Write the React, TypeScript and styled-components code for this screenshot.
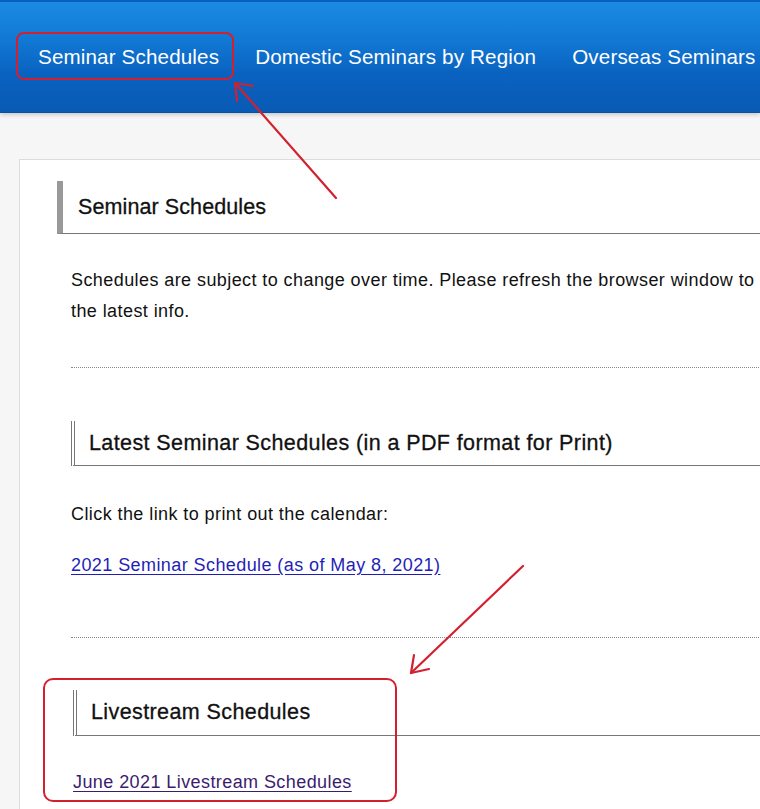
import React from 'react';
import styled, { createGlobalStyle } from 'styled-components';

const GlobalStyle = createGlobalStyle`
  html, body {
    margin: 0;
    padding: 0;
  }
  body {
    background: #f6f6f6;
    overflow: hidden;
    font-family: 'Liberation Sans', Arial, sans-serif;
    color: #111;
  }
`;

const Page = styled.div`
  position: relative;
  width: 760px;
  height: 809px;
  overflow: hidden;
`;

const NavBar = styled.nav`
  display: flex;
  align-items: center;
  height: 110px;
  padding-left: 20px;
  border-top: 2px solid #0b5fbe;
  border-bottom: 1px solid #0850a4;
  background: linear-gradient(#1a8be2 0%, #1178d4 35%, #0a62c0 65%, #095ab4 100%);
  box-shadow: 0 2px 4px rgba(0, 0, 0, 0.18);
  white-space: nowrap;
`;

const NavItem = styled.a<{ $marked?: boolean }>`
  position: relative;
  padding: 0 18px;
  color: #fff;
  font-size: 20.6px;
  letter-spacing: 0.15px;
  text-decoration: none;

  ${({ $marked }) =>
    $marked &&
    `
    &::after {
      content: '';
      position: absolute;
      left: -4px;
      right: 3px;
      top: -13px;
      bottom: -11px;
      border: 2px solid #d3202e;
      border-radius: 8px;
    }
  `}
`;

const Main = styled.main`
  padding: 46px 0 0 19px;
`;

const Panel = styled.div`
  width: 900px;
  min-height: 700px;
  background: #fff;
  border-top: 1px solid #dcdcdc;
  border-left: 1px solid #dcdcdc;
  padding: 21px 0 0 37px;
`;

const PageTitle = styled.h2`
  margin: 0;
  height: 52px;
  display: flex;
  align-items: center;
  padding-left: 15px;
  border-left: 6px solid #999;
  border-bottom: 1px solid #777;
  font-size: 21.5px;
  font-weight: normal;
  letter-spacing: 0.1px;
  -webkit-text-stroke: 0.3px #111;
`;

const Section = styled.section<{ $shift?: number }>`
  margin-left: ${({ $shift }) => 14 + ($shift ?? 0)}px;
`;

const SectionTitle = styled.h3<{ $height: number }>`
  margin: 0;
  height: ${({ $height }) => $height}px;
  display: flex;
  align-items: center;
  padding-left: 14px;
  border-left: 4px double #777;
  border-bottom: 1px solid #777;
  font-size: 21.5px;
  font-weight: normal;
  letter-spacing: 0.4px;
  -webkit-text-stroke: 0.3px #111;
`;

const Text = styled.p<{ $gap?: number }>`
  margin: ${({ $gap }) => $gap ?? 0}px 0 0;
  font-size: 18px;
  line-height: 31px;
  letter-spacing: 0.42px;
  width: 740px;
`;

const Link = styled.a<{ $visited?: boolean }>`
  color: ${({ $visited }) => ($visited ? '#3b1d6e' : '#1f1fb8')};
  text-decoration: underline;
  text-underline-offset: 3px;
`;

const Divider = styled.hr<{ $top: number; $bottom: number }>`
  margin: ${({ $top }) => $top}px 0 ${({ $bottom }) => $bottom}px;
  border: 0;
  border-top: 1px dotted #888;
  height: 0;
`;

const Marker = styled.div`
  position: relative;
  margin-left: -30px;
  padding: 0 0 0 30px;

  &::after {
    content: '';
    position: absolute;
    left: 0;
    top: -12px;
    width: 350px;
    bottom: -4px;
    border: 2px solid #d3202e;
    border-radius: 10px;
  }
`;

const Arrows = styled.svg`
  position: absolute;
  inset: 0;
  pointer-events: none;
`;

const App: React.FC = () => {
  return (
    <Page>
      <GlobalStyle />
      <NavBar>
        <NavItem $marked>Seminar Schedules</NavItem>
        <NavItem>Domestic Seminars by Region</NavItem>
        <NavItem>Overseas Seminars</NavItem>
      </NavBar>

      <Main>
        <Panel>
          <PageTitle>Seminar Schedules</PageTitle>

          <Section>
            <Text $gap={31}>
              Schedules are subject to change over time. Please refresh the browser window to see
              the latest info.
            </Text>
            <Divider $top={40} $bottom={53} />

            <SectionTitle $height={44}>
              Latest Seminar Schedules (in a PDF format for Print)
            </SectionTitle>
            <Text $gap={33}>Click the link to print out the calendar:</Text>
            <Text $gap={20}>
              <Link href="#">2021 Seminar Schedule (as of May 8, 2021)</Link>
            </Text>
            <Divider $top={56} $bottom={52} />
          </Section>

          <Section $shift={2}>
            <Marker>
              <SectionTitle $height={45}>Livestream Schedules</SectionTitle>
              <Text $gap={31}>
                <Link href="#" $visited>
                  June 2021 Livestream Schedules
                </Link>
              </Text>
            </Marker>
          </Section>
        </Panel>
      </Main>

      <Arrows width="760" height="809" viewBox="0 0 760 809">
        <g stroke="#d3202e" strokeWidth="2.2" fill="none" strokeLinecap="round" strokeLinejoin="round">
          <path d="M336 198 L235 83" />
          <path d="M253 86 L235 83 L237 101" />
          <path d="M523 566 L411 673" />
          <path d="M429 669 L411 673 L414 655" />
        </g>
      </Arrows>
    </Page>
  );
};

export default App;
